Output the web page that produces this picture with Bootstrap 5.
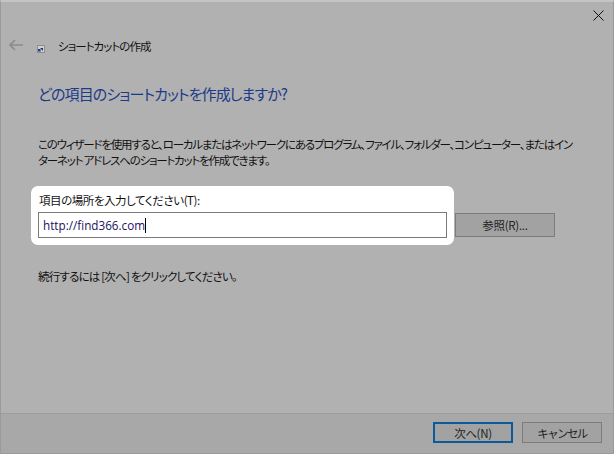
<!DOCTYPE html>
<html lang="ja">

<head>
    <meta charset="UTF-8">
    <title>ショートカットの作成</title>
    <link href="https://cdn.jsdelivr.net/npm/bootstrap@5.3.2/dist/css/bootstrap.min.css" rel="stylesheet">
    <style>
        html, body { height: 100%; }

        body {
            background-color: #b1b1b1;
            color: #111;
            font-family: "Noto Sans CJK JP", "Liberation Sans", sans-serif;
            font-size: 11.5px;
            line-height: 16px;
            letter-spacing: -0.8px;
            font-feature-settings: "palt";
            overflow: hidden;
        }

        .wizard {
            height: 454px;
            border: 1px solid #9a9a9a;
            border-top: 2px solid #c4c4c4;
        }

        .close-row { height: 28px; padding: 8px 9px 0 0; }

        .title-row { height: 32px; padding-left: 8px; }
        .title-row span { letter-spacing: -0.95px; }
        .back-icon { width: 14px; height: 12px; margin-right: 14px; margin-top: -2px; }
        .app-icon { width: 8px; height: 8px; margin-right: 13px; margin-top: 5px; }

        .wizard-body { padding: 0 24px 0 37px; }

        .wizard-heading {
            color: #1c3a8a;
            font-size: 15px;
            line-height: 22px;
            letter-spacing: -0.9px;
            margin: 21px 0 31px;
            font-weight: 400;
        }

        .wizard-desc { line-height: 16px; letter-spacing: -1.2px; margin: 0 0 18px 0; width: 536px; }

        .field-row { margin-left: -7px; gap: 1px; }

        .spot-box {
            background-color: #fff;
            border-radius: 7px;
            padding: 6px 7px 7px;
            width: 423px;
        }

        .spot-box label { display: block; margin-bottom: 4px; padding-left: 1px; line-height: 16px; letter-spacing: -0.45px; }

        .path-box {
            border: 1px solid #7a7a7a;
            height: 26px;
            padding-left: 4px;
            font-family: "Open Sans", "Liberation Sans", sans-serif;
            font-size: 11.7px;
            letter-spacing: 0;
            color: #1a1060;
            line-height: 24px;
        }

        .caret-bar {
            display: inline-block;
            width: 1px;
            height: 15px;
            background-color: #000;
            vertical-align: -3px;
        }

        .browse-btn, .foot-btn {
            background-color: #a2a2a2;
            border: 1px solid #7c7c7c;
            color: #222;
            font-size: 11.5px;
            letter-spacing: -0.3px;
            line-height: 16px;
            padding: 0;
            border-radius: 0;
        }

        .browse-btn { width: 100px; height: 24px; margin-top: 27px; }

        .next-line { margin-top: 23px; }

        .wizard-foot {
            background-color: #a8a8a8;
            border-top: 1px solid #9d9d9d;
            height: 40px;
            padding: 8px 11px 0 0;
            gap: 9px;
        }

        .foot-btn { width: 80px; height: 21px; }
        .foot-btn.is-default { border: 2px solid #0b5a9c; }
        .foot-btn.is-cancel { letter-spacing: -1.6px; }
    </style>
</head>

<body>
    <div class="wizard d-flex flex-column">
        <div class="close-row d-flex justify-content-end">
            <svg width="11" height="11" viewBox="0 0 11 11">
                <path d="M.5.5l10 10M10.5.5l-10 10" stroke="#111" stroke-width="1" fill="none" />
            </svg>
        </div>

        <div class="title-row d-flex align-items-center">
            <svg class="back-icon" viewBox="0 0 14 12">
                <path d="M6 1L1 6l5 5M1 6h13" stroke="#8c8c8c" stroke-width="1.6" fill="none" />
            </svg>
            <svg class="app-icon" viewBox="0 0 8 8">
                <rect width="8" height="8" fill="#8f8f8f" />
                <rect x="1" y="1" width="6" height="6" fill="#d0d0d0" />
                <path d="M1 7V4h3l-1 1 1 1-1 1-1-1z" fill="#1d3f78" />
                <path d="M3 3h3v3z" fill="#1d3f78" />
            </svg>
            <span>ショートカットの作成</span>
        </div>

        <div class="wizard-body flex-grow-1">
            <h1 class="wizard-heading">どの項目のショートカットを作成しますか?</h1>
            <p class="wizard-desc">このウィザードを使用すると、ローカルまたはネットワークにあるプログラム、ファイル、フォルダー、コンピューター、またはインターネット アドレスへのショートカットを作成できます。</p>

            <div class="field-row d-flex align-items-start">
                <div class="spot-box">
                    <label>項目の場所を入力してください(T):</label>
                    <div class="path-box">http://find366.com<span class="caret-bar"></span></div>
                </div>
                <button type="button" class="btn browse-btn">参照(R)...</button>
            </div>

            <p class="next-line mb-0">続行するには [次へ] をクリックしてください。</p>
        </div>

        <div class="wizard-foot d-flex justify-content-end">
            <button type="button" class="btn foot-btn is-default">次へ(N)</button>
            <button type="button" class="btn foot-btn is-cancel">キャンセル</button>
        </div>
    </div>

    <script src="https://cdn.jsdelivr.net/npm/bootstrap@5.3.2/dist/js/bootstrap.bundle.min.js"></script>
</body>

</html>
